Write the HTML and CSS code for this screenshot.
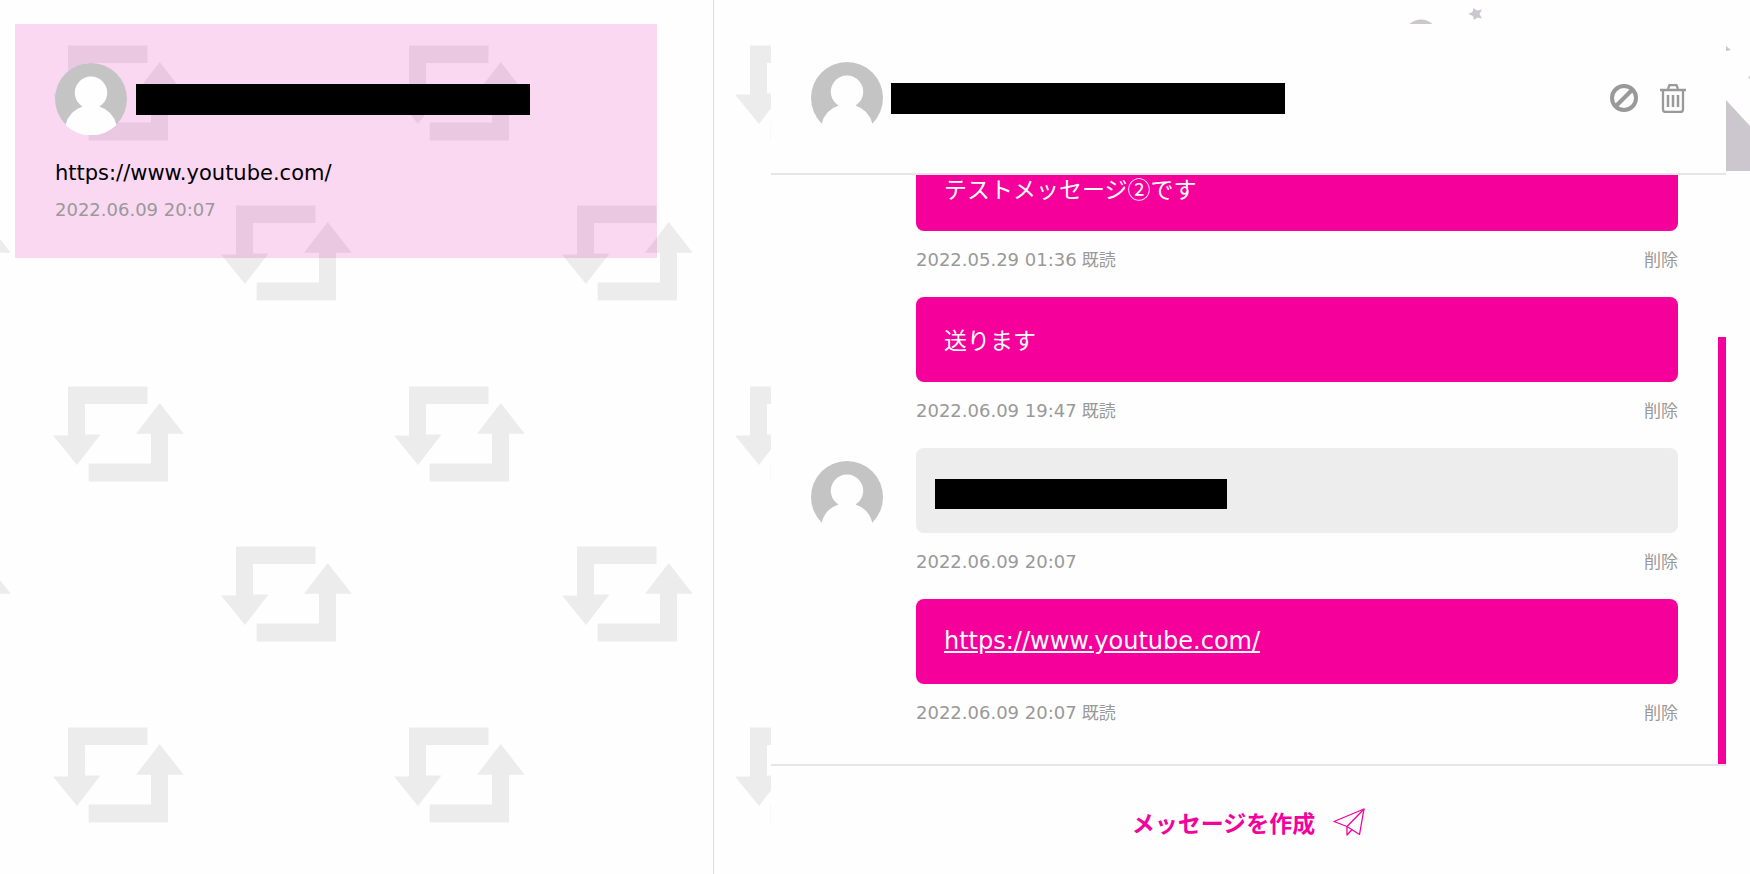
FILE: index.html
```
<!DOCTYPE html>
<html lang="ja">
<head>
    <meta charset="UTF-8">
    <title>メッセージ</title>
    <meta name="viewport" content="width=device-width, initial-scale=1">
    <link rel="stylesheet" href="styles.css">
</head>
<body>
    <!-- background pattern -->
    <svg class="bg-pattern" aria-hidden="true">
        <defs>
            <g id="loop" fill="#ececec">
                <path d="M68 45.5H147.5V63H85V93.5H100.5L77 124L53 94.5H68Z"/>
                <path d="M168 140.5H88.7V122.5H151V92.7H136L159.7 62L183.7 92.7H168Z"/>
            </g>
            <pattern id="tile" width="341" height="341" patternUnits="userSpaceOnUse">
                <use href="#loop"/>
                <use href="#loop" x="168" y="160"/>
                <use href="#loop" x="-173" y="160"/>
            </pattern>
        </defs>
        <rect width="100%" height="100%" fill="url(#tile)"/>
    </svg>
    <svg class="bg-deco" width="350" height="180" viewBox="0 0 350 180" fill="#ccc7cf" aria-hidden="true">
        <circle cx="21" cy="36" r="16.5"/>
        <path d="M73.500 8L77 10.500L82 9.500L79.500 14L82 18.500L77.500 17.500L74 20L73 16L68 14L72.500 12Z"/>
        <path d="M326 46L331 50L326 51Z"/>
        <path d="M348 77.500L350 76V79Z"/>
        <path d="M326 100L350 126V171H326Z"/>
    </svg>

    <svg class="sprite" aria-hidden="true">
        <symbol id="avatar" viewBox="0 0 72 72">
            <circle cx="36" cy="36" r="36" fill="#c4c4c4"/>
            <path fill="#fefefe" d="M27.500 43.500a16.200 16.200 0 1 1 17 0A26 26 0 0 1 61.500 62A36.200 36.200 0 0 1 10.500 62A26 26 0 0 1 27.500 43.500Z"/>
        </symbol>
    </svg>

    <div class="page">
        <aside class="sidebar">
            <a href="#" class="thread">
                <div class="thread-user">
                    <svg class="avatar"><use href="#avatar"/></svg>
                    <span class="mask mask-name"></span>
                </div>
                <p class="thread-text">https://www.youtube.com/</p>
                <time class="thread-date">2022.06.09 20:07</time>
            </a>
        </aside>

        <main class="main">
            <section class="chat">
                <header class="chat-header">
                    <svg class="avatar"><use href="#avatar"/></svg>
                    <span class="mask mask-name"></span>
                    <div class="actions">
                        <button type="button" aria-label="ブロック">
                            <svg width="28" height="28" viewBox="0 0 28 28" fill="none" stroke="#999" stroke-width="4">
                                <circle cx="14" cy="14" r="12"/>
                                <path d="M22 6L6 22"/>
                            </svg>
                        </button>
                        <button type="button" aria-label="削除">
                            <svg width="26" height="29" viewBox="0 0 26 29" fill="none" stroke="#999" stroke-width="2.300">
                                <path d="M0 6H26" stroke-width="2.500"/>
                                <path d="M8 5L9.500 1.200H16.500L18 5"/>
                                <path d="M3 6V25.500Q3 28 5.500 28H20.500Q23 28 23 25.500V6"/>
                                <path d="M8 11V23M13 11V23M18 11V23" stroke-width="2.500"/>
                            </svg>
                        </button>
                    </div>
                </header>

                <div class="messages">
                    <article class="message sent">
                        <div class="bubble">テストメッセージ②です</div>
                        <div class="meta"><time>2022.05.29 01:36</time><span>既読</span><a href="#">削除</a></div>
                    </article>
                    <article class="message sent">
                        <div class="bubble">送ります</div>
                        <div class="meta"><time>2022.06.09 19:47</time><span>既読</span><a href="#">削除</a></div>
                    </article>
                    <article class="message received">
                        <svg class="avatar"><use href="#avatar"/></svg>
                        <div class="bubble"><span class="mask mask-text"></span></div>
                        <div class="meta"><time>2022.06.09 20:07</time><a href="#">削除</a></div>
                    </article>
                    <article class="message sent">
                        <div class="bubble"><a class="url" href="https://www.youtube.com/">https://www.youtube.com/</a></div>
                        <div class="meta"><time>2022.06.09 20:07</time><span>既読</span><a href="#">削除</a></div>
                    </article>
                    <div class="scroll-thumb"></div>
                </div>

                <footer class="chat-footer">
                    <button type="button" class="compose">
                        メッセージを作成
                        <svg width="32" height="28" viewBox="0 0 32 28" fill="none" stroke="#f5009b" stroke-width="1.300" stroke-linejoin="round">
                            <path d="M31 1L1 13.500L14 18.500L26.500 26.500Z"/>
                            <path d="M31 1L14 18.500V27L19 21.500"/>
                        </svg>
                    </button>
                </footer>
            </section>
        </main>
    </div>
</body>
</html>
```
FILE: styles.css
```
* {
    box-sizing: border-box;
}
body {
    margin: 0;
    background: #fefefe;
    color: #111;
    font-family: 'DejaVu Sans', 'Noto Sans CJK JP', sans-serif;
}
a {
    color: inherit;
    text-decoration: none;
}
button {
    display: flex;
    align-items: center;
    padding: 0;
    border: none;
    background: none;
    font-family: inherit;
    cursor: pointer;
}
.bg-pattern {
    position: absolute;
    top: 0;
    left: 0;
    width: 100%;
    height: 100%;
    z-index: -1;
}
.bg-deco {
    position: absolute;
    top: 0;
    right: 0;
    z-index: -1;
}
.sprite {
    position: absolute;
    width: 0;
    height: 0;
}
.page {
    display: grid;
    grid-template-columns: 714fr 1036fr;
    grid-template-rows: minmax(0, 1fr);
    height: 100vh;
    min-height: 600px;
}
.avatar {
    width: 72px;
    height: 72px;
    flex-shrink: 0;
}
.mask {
    display: block;
    background: #000;
}
.mask-name {
    width: 394px;
    height: 31px;
}
.mask-text {
    width: 292px;
    height: 30px;
}

/* thread list */
.sidebar {
    padding: 24px 0 0 15px;
    border-right: 1px solid #ddd;
}
.thread {
    display: block;
    width: 92%;
    padding: 39px 40px 34px;
    background: rgba(235, 0, 165, .15);
}
.thread-user {
    display: flex;
    align-items: center;
    gap: 9px;
}
.thread-text {
    margin: 20px 0 5px;
    font-size: 21px;
    line-height: 36px;
    color: #000;
}
.thread-date {
    display: block;
    font-size: 18px;
    line-height: 28px;
    color: #999;
}

/* chat */
.main {
    min-width: 0;
    padding: 24px 24px 0 57px;
}
.chat {
    display: flex;
    flex-direction: column;
    height: 100%;
    background: #fefefe;
}
.chat-header {
    display: flex;
    align-items: center;
    gap: 8px;
    height: 151px;
    padding: 0 40px 1px;
    border-bottom: 2px solid #e6e6e6;
}
.actions {
    display: flex;
    align-items: center;
    gap: 22px;
    margin-left: auto;
}
.messages {
    position: relative;
    flex: 1;
    display: flex;
    flex-direction: column;
    justify-content: flex-end;
    min-height: 0;
    padding: 0 48px 14px 145px;
    overflow: hidden;
}
.message {
    position: relative;
    flex-shrink: 0;
}
.message .avatar {
    position: absolute;
    top: 13px;
    left: -105px;
}
.bubble {
    display: flex;
    align-items: center;
    height: 85px;
    padding: 0 28px 2px;
    border-radius: 8px;
    background: #f5009b;
    color: #fff;
    font-family: 'Noto Sans CJK JP', sans-serif;
    font-size: 23px;
    line-height: 24px;
}
.received .bubble {
    padding: 6px 19px 0;
    background: #ededed;
}
.url {
    font-family: 'DejaVu Sans', sans-serif;
    font-size: 24px;
    line-height: 28px;
    text-decoration: underline;
}
.meta {
    display: flex;
    gap: 5px;
    padding: 15px 0 23px;
    font-size: 17px;
    line-height: 28px;
    color: #999;
}
.meta time {
    font-size: 18px;
}
.meta a {
    margin-left: auto;
}
.scroll-thumb {
    position: absolute;
    right: 0;
    bottom: 0;
    width: 8px;
    height: 427px;
    background: #f5009b;
}
.chat-footer {
    display: flex;
    justify-content: center;
    flex-shrink: 0;
    height: 110px;
    padding-top: 4px;
    border-top: 2px solid #e6e6e6;
}
.compose {
    gap: 18px;
    color: #f5009b;
    font-size: 23px;
    font-weight: bold;
}
```
